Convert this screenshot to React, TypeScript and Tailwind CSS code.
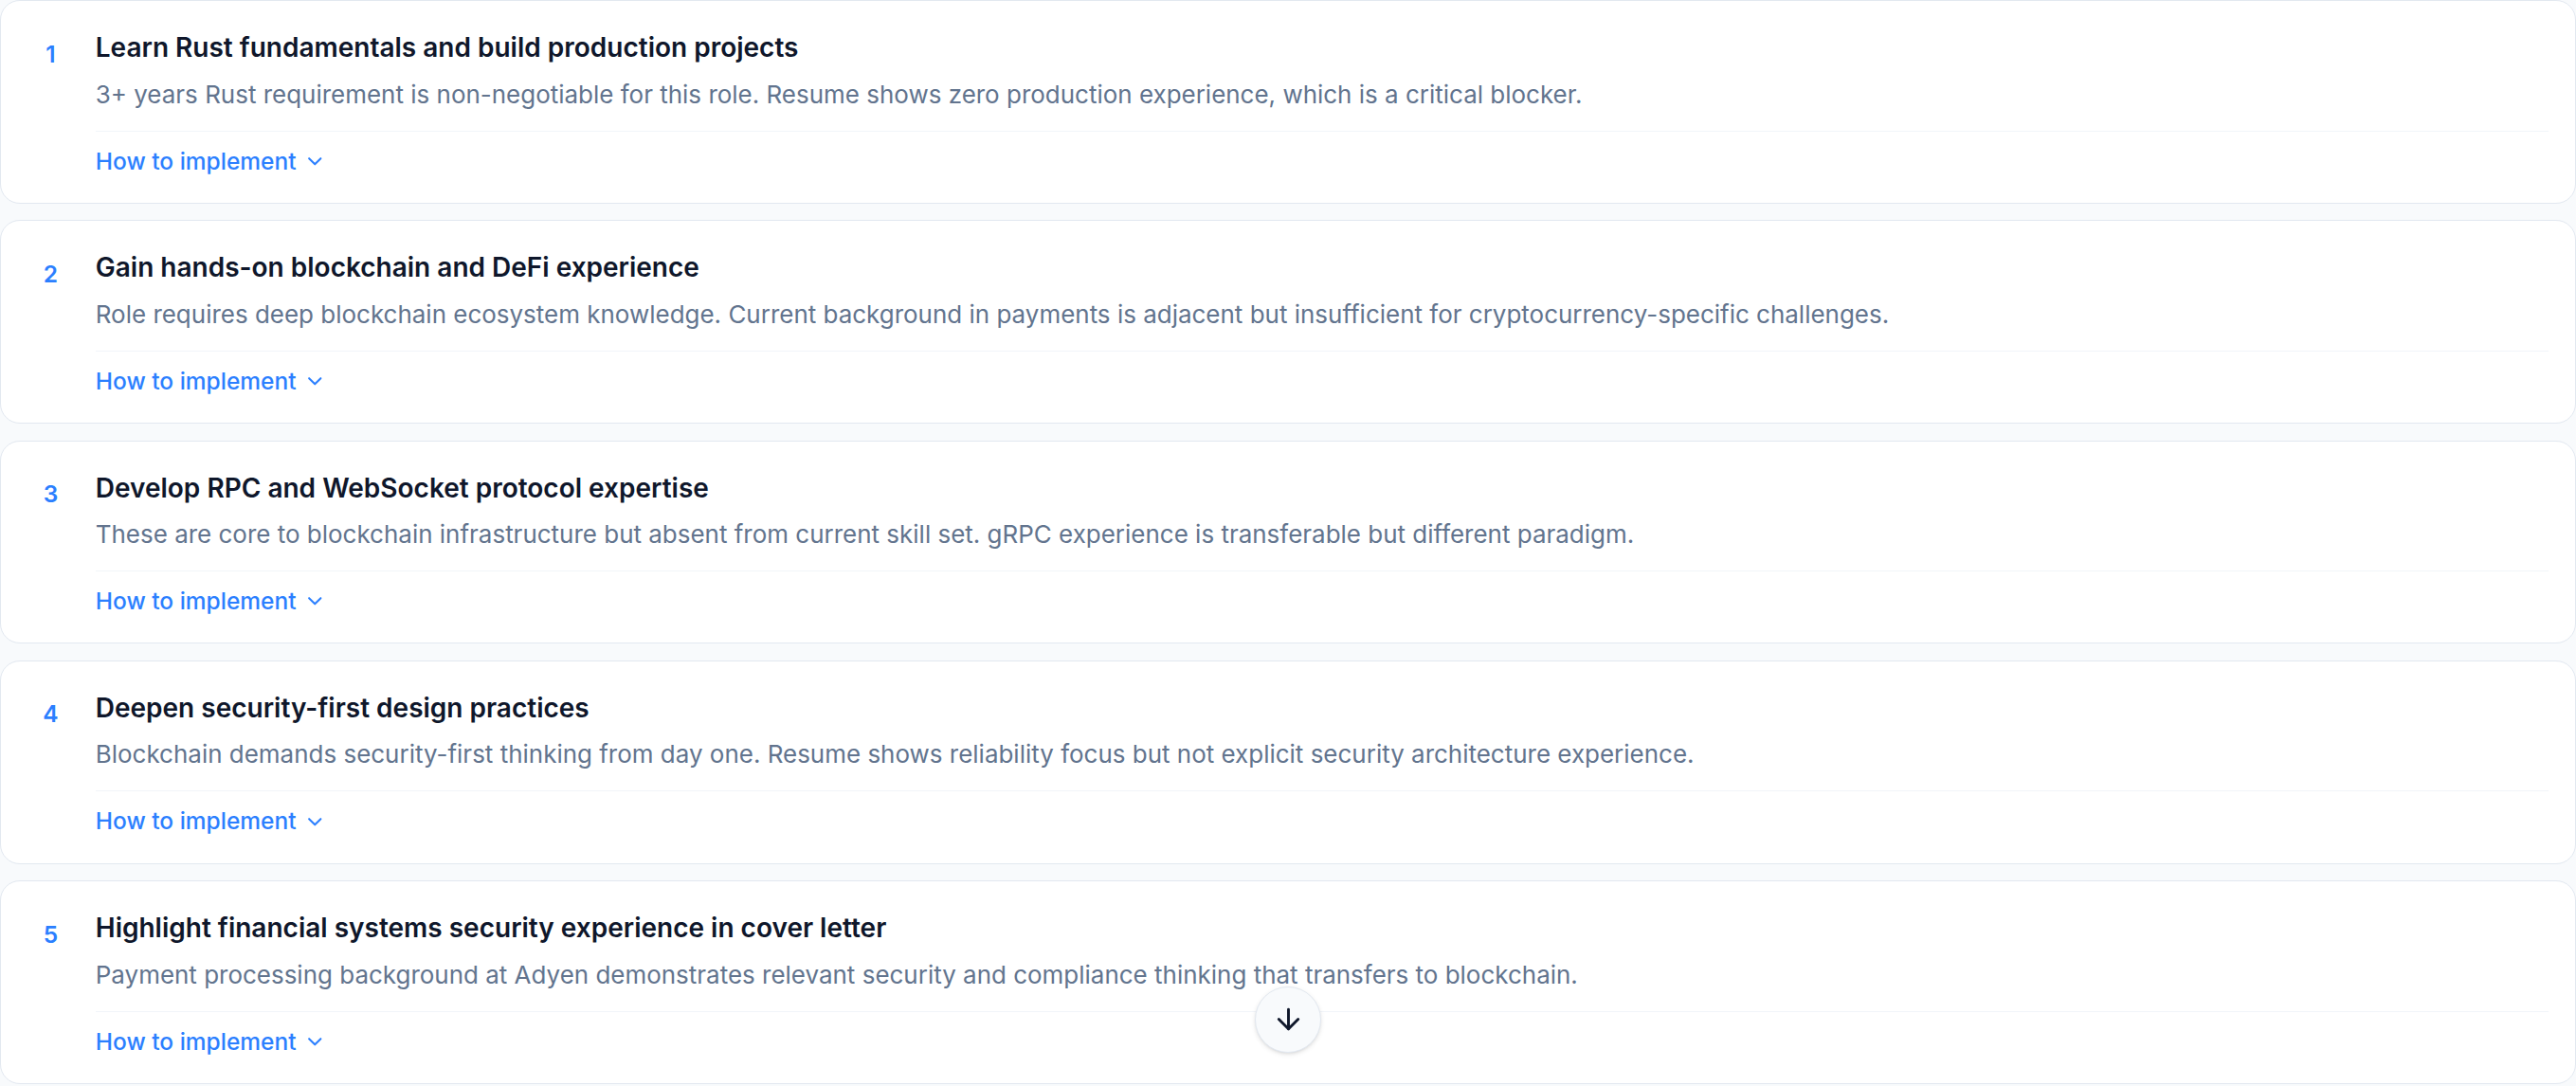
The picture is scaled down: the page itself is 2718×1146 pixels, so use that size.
import { ArrowDown, ChevronDown } from "lucide-react";

const ACTIONS = [
  {
    title: "Learn Rust fundamentals and build production projects",
    reason:
      "3+ years Rust requirement is non-negotiable for this role. Resume shows zero production experience, which is a critical blocker.",
  },
  {
    title: "Gain hands-on blockchain and DeFi experience",
    reason:
      "Role requires deep blockchain ecosystem knowledge. Current background in payments is adjacent but insufficient for cryptocurrency-specific challenges.",
  },
  {
    title: "Develop RPC and WebSocket protocol expertise",
    reason:
      "These are core to blockchain infrastructure but absent from current skill set. gRPC experience is transferable but different paradigm.",
  },
  {
    title: "Deepen security-first design practices",
    reason:
      "Blockchain demands security-first thinking from day one. Resume shows reliability focus but not explicit security architecture experience.",
  },
  {
    title: "Highlight financial systems security experience in cover letter",
    reason:
      "Payment processing background at Adyen demonstrates relevant security and compliance thinking that transfers to blockchain.",
  },
];

export default function App() {
  return (
    // the reference was captured at a 1.75 device pixel ratio
    <div className="min-h-screen bg-slate-50 font-['Inter',sans-serif] antialiased">
      <div className="relative [zoom:1.75]">
        <ol className="flex flex-col gap-2.5">
          {ACTIONS.map((action, i) => (
            <li
              key={action.title}
              className="flex gap-[13px] rounded-xl border border-slate-200 bg-white p-4 pb-[15px]"
            >
              <span className="mt-[6px] w-7 shrink-0 text-center text-sm font-semibold text-blue-500">
                {i + 1}
              </span>
              <div className="min-w-0 flex-1">
                <h3 className="text-base font-semibold text-slate-900">{action.title}</h3>
                <p className="mt-[6px] text-[14.85px] leading-5 text-slate-500">{action.reason}</p>
                <div className="mt-3 flex border-t border-slate-100 pt-2">
                  <button
                    type="button"
                    className="flex items-center gap-1 text-sm font-medium text-blue-500"
                  >
                    How to implement
                    <ChevronDown className="h-3.5 w-3.5" aria-hidden="true" />
                  </button>
                </div>
              </div>
            </li>
          ))}
        </ol>

        <button
          type="button"
          aria-label="Scroll down"
          className="absolute bottom-[19px] left-1/2 flex h-10 w-10 -translate-x-1/2 items-center justify-center rounded-full border border-slate-200 bg-slate-50 text-slate-900 shadow-sm"
        >
          <ArrowDown className="h-5 w-5" aria-hidden="true" />
        </button>
      </div>
    </div>
  );
}
